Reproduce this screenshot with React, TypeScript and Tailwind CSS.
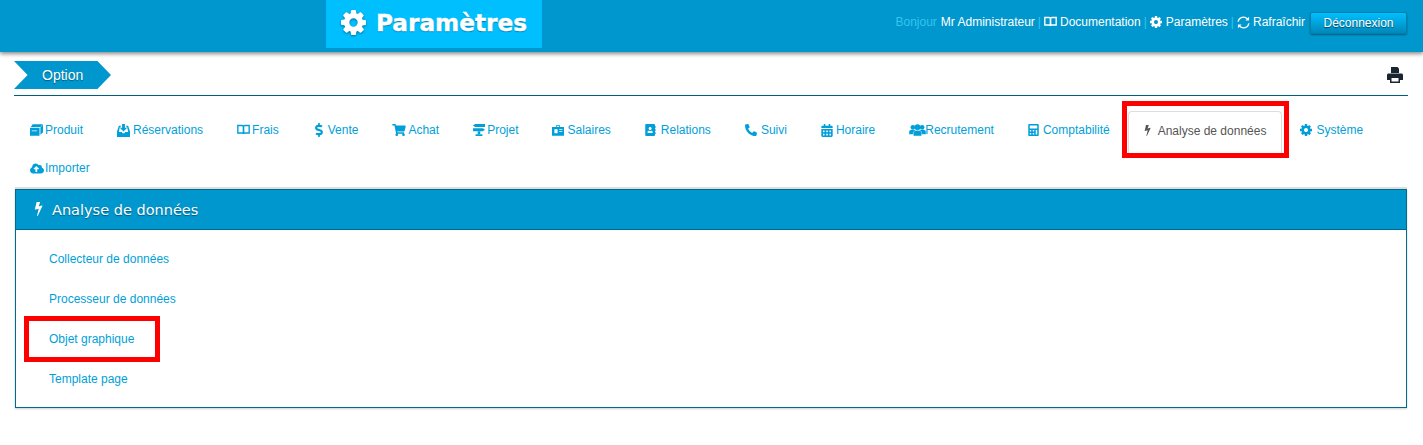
import type { ReactNode } from 'react'
import {
  FaAddressBook,
  FaCalculator,
  FaCalendarAlt,
  FaCloudUploadAlt,
  FaDollarSign,
  FaPhoneAlt,
  FaShoppingCart
} from 'react-icons/fa'

const sans = "font-['Liberation_Sans',Arial,sans-serif]"

type IconProps = { className?: string }

function CogIcon({ className }: IconProps) {
  return (
    <svg viewBox="128 128 1536 1536" className={className} fill="currentColor">
      <path d="M1152 896q0-106-75-181t-181-75-181 75-75 181 75 181 181 75 181-75 75-181zm512-109v222q0 12-8 23t-20 13l-185 28q-19 54-39 91 35 50 107 138 10 12 10 25t-9 23q-27 37-99 108t-94 71q-12 0-26-9l-138-108q-44 23-91 38-16 136-29 186-7 28-36 28h-222q-14 0-24.500-8.500t-11.500-21.500l-28-184q-49-16-90-37l-141 107q-10 9-25 9-14 0-25-11-126-114-165-168-7-10-7-23 0-12 8-23 15-21 51-66.500t54-70.500q-27-50-41-99l-183-27q-13-2-21-12.500t-8-23.500v-222q0-12 8-23t19-13l186-28q14-46 39-92-40-57-107-138-10-12-10-24 0-10 9-23 26-36 98.500-107.500t94.500-71.500q13 0 26 10l138 107q44-23 91-38 16-136 29-186 7-28 36-28h222q14 0 24.500 8.500t11.500 21.500l28 184q49 16 90 37l142-107q9-9 24-9 13 0 25 10 129 119 165 170 7 8 7 22 0 12-8 23-15 21-51 66.500t-54 70.500q26 50 41 98l183 28q13 2 21 12.500t8 23.500z" />
    </svg>
  )
}

function BoltIcon({ className }: IconProps) {
  return (
    <svg viewBox="380 128 1000 1664" className={className} fill="currentColor">
      <path d="M1333 566q18 20 7 44l-540 1157q-13 25-42 25-4 0-14-2-17-5-25.500-19t-4.500-30l197-808-406 101q-4 1-12 1-18 0-31-11-18-15-13-39l201-825q4-14 16-23t28-9h328q19 0 32 12.500t13 29.500q0 8-5 18l-171 463 396-98q8-2 12-2 19 0 34 15z" />
    </svg>
  )
}

function BookIcon({ className }: IconProps) {
  return (
    <svg viewBox="0 0 16 14" className={className} fill="none" stroke="currentColor" strokeWidth="1.7">
      <path d="M1 1.500h5.200C7.300 1.500 8 2.200 8 3.300V12c0-.8-.7-1.300-1.600-1.300H1z" />
      <path d="M15 1.500H9.800C8.700 1.500 8 2.200 8 3.300V12c0-.8.700-1.300 1.600-1.300H15z" />
    </svg>
  )
}

function RefreshIcon({ className }: IconProps) {
  return (
    <svg viewBox="0 0 14 14" className={className} fill="none" stroke="currentColor" strokeWidth="1.400">
      <path d="M1.200 6.200A5.800 5.800 0 0 1 11.300 3.200" />
      <path d="M12.800 7.800A5.800 5.800 0 0 1 2.700 10.800" />
      <path d="M13 .8v4H9z" fill="currentColor" stroke="none" />
      <path d="M1 13.200v-4h4z" fill="currentColor" stroke="none" />
    </svg>
  )
}

function BoxIcon({ className }: IconProps) {
  return (
    <svg viewBox="0 0 15 13" className={className} fill="currentColor">
      <path d="M0 4h11v9H0zM2 7v1h6V7z" fillRule="evenodd" />
      <path d="M3 0h12l-3 3H1zM12 3.500l3-3V9l-3 3z" />
    </svg>
  )
}

function InboxIcon({ className }: IconProps) {
  return (
    <svg viewBox="0 0 14 14" className={className} fill="currentColor">
      <path d="M5.500 0h3v4H11L7 8 3 4h2.500z" />
      <path d="M2 2h2v1.500H3L2 8.500h3l1 1.500h2l1-1.500h3L11 3.500h-1V2h2l2 6v6H0V8z" />
    </svg>
  )
}

function BadgeIcon({ className }: IconProps) {
  return (
    <svg viewBox="0 0 15 13" className={className} fill="currentColor">
      <path fillRule="evenodd" d="M5 0h5v2h5v11H0V2h5zM6 1v1h3V1zM3 5v5h4V5zM9 5v1h4V5zM9 7.500v1h4v-1z" />
    </svg>
  )
}

function SignIcon({ className }: IconProps) {
  return (
    <svg viewBox="0 0 14 14" className={className} fill="currentColor">
      <path d="M2.500 0H14v3.500H2.500L0 1.750z" />
      <path d="M0 5h11.500L14 6.750 11.500 8.500H0z" />
      <path d="M5.500 8.500h3V12h-3z" />
      <path d="M3 12h8v2H3z" />
    </svg>
  )
}

function UsersIcon({ className }: IconProps) {
  return (
    <svg viewBox="0 0 18 13" className={className} fill="currentColor">
      <circle cx="4" cy="3.500" r="2.500" />
      <circle cx="14" cy="3.500" r="2.500" />
      <path d="M0 11V8.500C0 7 1.500 6 4 6s3 1 3 2v3z" />
      <path d="M18 11V8.500C18 7 16.500 6 14 6s-3 1-3 2v3z" />
      <circle cx="9" cy="3.500" r="3.200" />
      <path d="M4.500 13V9.500C4.500 7.800 6.500 6.800 9 6.800s4.500 1 4.500 2.700V13z" stroke="#fff" strokeWidth=".5" />
    </svg>
  )
}

function PrintIcon({ className }: IconProps) {
  return (
    <svg viewBox="0 0 16 16" className={className} fill="currentColor">
      <path d="M4 0h6.500L12 1.500V6H4z" />
      <path fillRule="evenodd" d="M1.500 6.500h13c.8 0 1.500.7 1.500 1.500v5h-3v3H3v-3H0V8c0-.8.7-1.500 1.500-1.500zM4.500 11v3.500h7V11z" />
    </svg>
  )
}

const tabs: { label: string; icon: ReactNode; active?: boolean }[] = [
  { label: 'Produit', icon: <BoxIcon className="w-[13px] h-[12px] mr-[2px]" /> },
  { label: 'Réservations', icon: <InboxIcon className="w-[13px] h-[13px] mr-[3px]" /> },
  { label: 'Frais', icon: <BookIcon className="w-[13px] h-[12px] mr-[2px]" /> },
  { label: 'Vente', icon: <FaDollarSign className="w-[12px] h-[14px] mr-[3px]" /> },
  { label: 'Achat', icon: <FaShoppingCart className="w-[14px] h-[12px] mr-[2px]" /> },
  { label: 'Projet', icon: <SignIcon className="w-[12px] h-[12px] mr-[2px]" /> },
  { label: 'Salaires', icon: <BadgeIcon className="w-[12px] h-[11px] mr-[3px]" /> },
  { label: 'Relations', icon: <FaAddressBook className="w-[11px] h-[12px] mr-[5px]" /> },
  { label: 'Suivi', icon: <FaPhoneAlt className="w-[12px] h-[12px] mr-[4px]" /> },
  { label: 'Horaire', icon: <FaCalendarAlt className="w-[12px] h-[13px] mr-[3px]" /> },
  { label: 'Recrutement', icon: <UsersIcon className="w-[17px] h-[12px] -mr-[1px]" /> },
  { label: 'Comptabilité', icon: <FaCalculator className="w-[11px] h-[12px] mr-[4px]" /> },
  { label: 'Analyse de données', icon: <BoltIcon className="w-[7px] h-[11px] mr-[7px]" />, active: true },
  { label: 'Système', icon: <CogIcon className="w-[12px] h-[12px] mr-[4px]" /> },
  { label: 'Importer', icon: <FaCloudUploadAlt className="w-[14px] h-[13px] mr-[1px]" /> }
]

const links = ['Collecteur de données', 'Processeur de données', 'Objet graphique', 'Template page']

function Sep() {
  return <span className="text-[#33c5ee] mx-[3px]">|</span>
}

export default function App() {
  return (
    <div className={`${sans} relative w-[1423px] h-[445px] bg-white text-[12px] overflow-hidden`}>
      <header className="h-[52px] bg-[#0097ce] shadow-[0_2px_4px_rgba(0,0,0,0.45)] flex items-start justify-between pl-[326px] pr-[16px]">
        <div className="w-[216px] h-[48px] bg-[#00bfff] flex items-center pl-[15px] text-white">
          <CogIcon className="w-[25px] h-[25px] mr-[10px] -mt-[4px] drop-shadow-[0_1px_1px_rgba(0,0,0,0.4)]" />
          <h1 className="font-['DejaVu_Sans',sans-serif] font-bold text-[23.200px] -mt-[2px] [-webkit-text-stroke:0.4px_white] [text-shadow:0_1px_1px_rgba(0,0,0,0.4)]">
            Paramètres
          </h1>
        </div>
        <div className="flex items-center h-[22px] mt-[11px] text-white">
          <span className="text-[#33c5ee] mr-[4px]">Bonjour</span>
          <span>Mr Administrateur</span>
          <Sep />
          <BookIcon className="w-[13px] h-[12px] mr-[3px]" />
          <span>Documentation</span>
          <Sep />
          <CogIcon className="w-[12px] h-[12px] mr-[4px]" />
          <span>Paramètres</span>
          <Sep />
          <RefreshIcon className="w-[13px] h-[13px] mr-[3px]" />
          <span>Rafraîchir</span>
          <button className="ml-[5px] self-start mt-[1px] w-[97px] h-[22px] rounded-[2px] bg-gradient-to-b from-[#00bfff] to-[#0088ba] border border-[#0080ad] shadow-[0_1px_2px_rgba(0,0,0,0.4)] text-white [text-shadow:0_1px_1px_rgba(0,0,0,0.5)]">
            Déconnexion
          </button>
        </div>
      </header>

      <div className="mx-[14px] mt-[9px] w-[1394px] h-[35px] border-b border-[#005f80] flex items-start justify-between">
        <div className="w-[97px] h-[28px] bg-[#0097ce] [clip-path:polygon(0_0,86%_0,100%_50%,86%_100%,0_100%,14%_50%)] flex items-center pl-[28px] text-[14px] text-white [text-shadow:0_1px_1px_rgba(0,0,0,0.4)]">
          Option
        </div>
        <PrintIcon className="w-[16px] h-[16px] mt-[6px] mr-[5px] text-[#1a2530]" />
      </div>

      <nav className="flex flex-wrap items-start h-[76px] px-[14px] mt-[15px] w-[1423px]">
        {tabs.map(t => (
          <a
            key={t.label}
            className={
              t.active
                ? 'flex items-center h-[46px] -mb-[8px] pb-[8px] px-[15px] mr-[2px] border border-b-0 border-[#ddd] rounded-t-[4px] text-[#555]'
                : 'flex items-center h-[38px] px-[15px] mr-[2px] border border-transparent text-[#009fd9]'
            }
          >
            {t.icon}
            {t.label}
          </a>
        ))}
      </nav>

      <section className="mx-[15px] mt-[2px] w-[1392px] h-[219px] border border-[#006a8f] shadow-[0_-2px_0_#ddd,0_1px_2px_rgba(0,0,0,0.2)]">
        <div className="h-[40px] bg-[#0097ce] border-b border-[#006a8f] flex items-center pl-[18px] pt-[2px] text-white">
          <BoltIcon className="w-[9px] h-[14px] mr-[9px] -mt-[4px]" />
          <h2 className="font-['DejaVu_Sans',sans-serif] text-[14.500px] [text-shadow:0_1px_1px_rgba(0,0,0,0.4)]">
            Analyse de données
          </h2>
        </div>
        <ul className="pt-[9px] pl-[33px] text-[#009fd9]">
          {links.map(l => (
            <li key={l} className="h-[40px] flex items-center">
              {l}
            </li>
          ))}
        </ul>
      </section>

      <div className="absolute left-[1122px] top-[101px] w-[167px] h-[57px] border-[5px] border-[#ff0000]" />
      <div className="absolute left-[24px] top-[316px] w-[136px] h-[46px] border-[5px] border-[#ff0000]" />
    </div>
  )
}
